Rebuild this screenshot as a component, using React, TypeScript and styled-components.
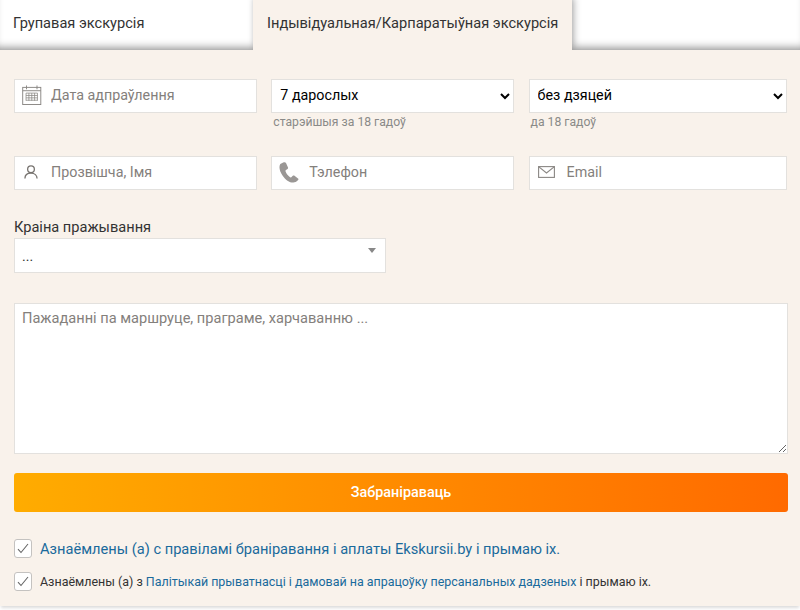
import React from "react";
import styled, { createGlobalStyle } from "styled-components";

const Global = createGlobalStyle`
  html, body { margin: 0; padding: 0; background: #fff; }
  body { font-family: "Roboto", "Noto Sans", sans-serif; color: #333; }
  * { box-sizing: border-box; }
`;
const Page = styled.div`width: 800px; height: 610px; overflow: hidden; background: #fff;`;
const Tabs = styled.div`display: flex; height: 50px; position: relative;`;
const Tab = styled.div<{ $active?: boolean; $w: string }>`
  width: ${p => p.$w};
  height: 50px;
  padding: 14px 0 0 ${p => (p.$active ? "14px" : "13px")};
  font-size: 14.6px;
  line-height: 18px;
  white-space: nowrap;
  color: #333;
  background: ${p => (p.$active ? "#f9f2eb" : "#fff")};
  box-shadow: ${p => (p.$active ? "2px -2px 7px rgba(0,0,0,.3)" : "inset 0 -8px 8px -6px rgba(0,0,0,.45)")};
  position: relative;
  z-index: ${p => (p.$active ? 1 : 0)};
`;
const Filler = styled.div`flex: 1; height: 50px; box-shadow: inset 0 -8px 8px -6px rgba(0,0,0,.45);`;
const Panel = styled.div`
  height: 556px;
  background: #f9f2eb;
  padding: 29px 12px 0 14px;
  box-shadow: 0 3px 3px -1px rgba(0,0,0,.14);
  position: relative;
  z-index: 2;
`;
const Row = styled.div`display: grid; grid-template-columns: 243px 243px 258px; column-gap: 14.3px;`;
const ContactRow = styled(Row)`margin-top: 42px;`;
const Field = styled.div`display: flex; flex-direction: column; min-width: 0;`;
const Hint = styled.div`font-size: 12.2px; line-height: 16px; color: #8a8a88; margin: 0 0 0 2px; height: 1px; position: relative; top: 1px;`;
const Box = styled.label`
  display: flex; align-items: center; height: 34px; background: #fff;
  border: 1px solid #e3e1de; padding-bottom: 2px;
  color: #84807c; font-size: 14.3px; cursor: text;
`;
const IconSlot = styled.span<{ $w: number; $pl: number }>`
  display: flex; align-items: center; flex: none; width: ${p => p.$w}px; padding-left: ${p => p.$pl}px; color: #77736f;
`;
const TextInput = styled.input`
  border: 0; outline: 0; background: none; width: 100%; min-width: 0; padding: 0;
  font: inherit;
  color: #333;
  &::placeholder { color: #84807c; opacity: 1; }
`;
const NativeSelect = styled.select`
  height: 34px; width: 100%; background: #fff; border: 1px solid #e3e1de; border-radius: 0;
  font-family: "Roboto", sans-serif; font-size: 14.3px; color: #000; padding: 0 0 2px 4px; outline: 0;
`;
const CountryLabel = styled.div`margin-top: 28px; font-size: 14.6px; line-height: 18px; color: #333; height: 20px;`;
const CountryBox = styled.div`
  width: 372px; height: 35px; background: #fff; border: 1px solid #e3e1de; position: relative;
  padding: 8px 0 0 7px; font-size: 14px; line-height: 18px; color: #333;
`;
const Caret = styled.span`
  position: absolute; right: 9px; top: 9px; width: 0; height: 0;
  border-left: 4px solid transparent; border-right: 4px solid transparent; border-top: 5.5px solid #888;
`;
const Wishes = styled.textarea`
  display: block; margin-top: 30px; width: 774px; height: 151px; background: #fff; border: 1px solid #e3e1de; outline: 0; border-radius: 0;
  padding: 5px 7px; font-family: "Roboto", sans-serif; font-size: 14.6px; line-height: 18px; resize: vertical;
  &::placeholder { color: #84807c; opacity: 1; }
`;
const Submit = styled.button`
  display: block; margin-top: 19px; width: 774px; height: 39px; border: 0; border-radius: 3px; padding: 0;
  background: linear-gradient(90deg, #ffac00 0%, #ff6a00 100%);
  color: #fff; font-family: "Roboto", sans-serif; font-size: 14.4px; font-weight: 500;
`;
const Agreements = styled.div`margin-top: 27px; display: flex; flex-direction: column; gap: 14px;`;
const Agree = styled.div<{ $big?: boolean }>`
  display: flex; align-items: center; gap: 8px; height: 19px;
  font-size: ${p => (p.$big ? "14.65px" : "12.46px")}; color: ${p => (p.$big ? "#1a6a9c" : "#333")}; white-space: nowrap;
`;
const Check = styled.span`
  flex: none; width: 18px; height: 19px; background: #fff; border: 1px solid #c4c2c0; border-radius: 3px;
  display: flex; align-items: center; justify-content: center; color: #666;
`;
const Link = styled.a`color: #1a6a9c; text-decoration: none;`;

const CalendarIcon = () => (
  <svg width="19.500" height="20" viewBox="0 0 20 21" fill="none" stroke="#8a8784">
    <rect x=".5" y="2.5" width="19" height="18" />
    <path d="M.5 6h19M4.500 .5v4M15.500 .5v4" />
    <path d="M4 8.500h12M4 11h12M4 13.500h12M4 16h12M4 8.500v8M7 8.500v8M10 8.500v8M13 8.500v8M16 8.500v8" strokeWidth=".8" />
  </svg>
);
const UserIcon = () => (
  <svg width="14" height="14" viewBox="0 0 15 15" fill="none" stroke="currentColor" strokeWidth="1.400">
    <circle cx="7.500" cy="4.600" r="3.600" />
    <path d="M1 14.500c0-3.500 2.600-5.700 6.500-5.700s6.500 2.200 6.500 5.700" />
  </svg>
);
const PhoneIcon = () => (
  <svg width="20" height="21" viewBox="0 0 20 21" fill="#9a9795">
    <path d="M4.200.6 1.300 2C-.3 4.600.4 9 3.500 13.400c3 4.300 7 7.300 10.800 7.200 1.600 0 3-.7 4.800-2.500.5-.6.4-1.200-.1-1.600L15.500 13.700c-.6-.4-1.200-.4-1.700.1l-1.500 1.400c-.5.4-1 .3-1.500-.1C8.900 13.700 7.300 11.500 6.500 9.300c-.2-.6 0-1.100.5-1.400l1.500-.9c.6-.4.7-1 .5-1.600L7 1.100C6.500.2 5.500 0 4.200.6Z" />
  </svg>
);
const MailIcon = () => (
  <svg width="17" height="12" viewBox="0 0 17 12" fill="none" stroke="#8a8784" strokeWidth="1.100">
    <rect x=".6" y=".6" width="15.800" height="10.800" />
    <path d="M.6.6 8.500 7l7.900-6.400" />
  </svg>
);
const CheckIcon = () => (
  <svg width="12" height="11" viewBox="0 0 12 11" fill="none" stroke="currentColor" strokeWidth="1.100">
    <path d="M1 6.200 4 9.500 11 1" />
  </svg>
);

export default function App() {
  return (
    <Page>
      <Global />
      <Tabs>
        <Tab $w="253px">Групавая экскурсія</Tab>
        <Tab $w="319px" $active>Індывідуальная/Карпаратыўная экскурсія</Tab>
        <Filler />
      </Tabs>
      <Panel>
        <Row>
          <Box>
            <IconSlot $w={36} $pl={7}><CalendarIcon /></IconSlot>
            <TextInput placeholder="Дата адпраўлення" />
          </Box>
          <Field>
            <NativeSelect defaultValue="7"><option value="7">7 дарослых</option></NativeSelect>
            <Hint>старэйшыя за 18 гадоў</Hint>
          </Field>
          <Field>
            <NativeSelect defaultValue="0"><option value="0">без дзяцей</option></NativeSelect>
            <Hint>да 18 гадоў</Hint>
          </Field>
        </Row>
        <ContactRow>
          <Box>
            <IconSlot $w={36} $pl={9}><UserIcon /></IconSlot>
            <TextInput placeholder="Прозвішча, Імя" />
          </Box>
          <Box>
            <IconSlot $w={37} $pl={7}><PhoneIcon /></IconSlot>
            <TextInput placeholder="Тэлефон" />
          </Box>
          <Box>
            <IconSlot $w={37} $pl={8}><MailIcon /></IconSlot>
            <TextInput placeholder="Email" />
          </Box>
        </ContactRow>
        <CountryLabel>Краіна пражывання</CountryLabel>
        <CountryBox>...<Caret /></CountryBox>
        <Wishes placeholder="Пажаданні па маршруце, праграме, харчаванню ..." />
        <Submit type="button">Забраніраваць</Submit>
        <Agreements>
          <Agree $big>
            <Check><CheckIcon /></Check>
            <span>Азнаёмлены (а) с правіламі браніравання і аплаты Ekskursii.by і прымаю іх.</span>
          </Agree>
          <Agree>
            <Check><CheckIcon /></Check>
            <span>Азнаёмлены (а) з <Link href="#">Палітыкай прыватнасці і дамовай на апрацоўку персанальных дадзеных</Link> і прымаю іх.</span>
          </Agree>
        </Agreements>
      </Panel>
    </Page>
  );
}
